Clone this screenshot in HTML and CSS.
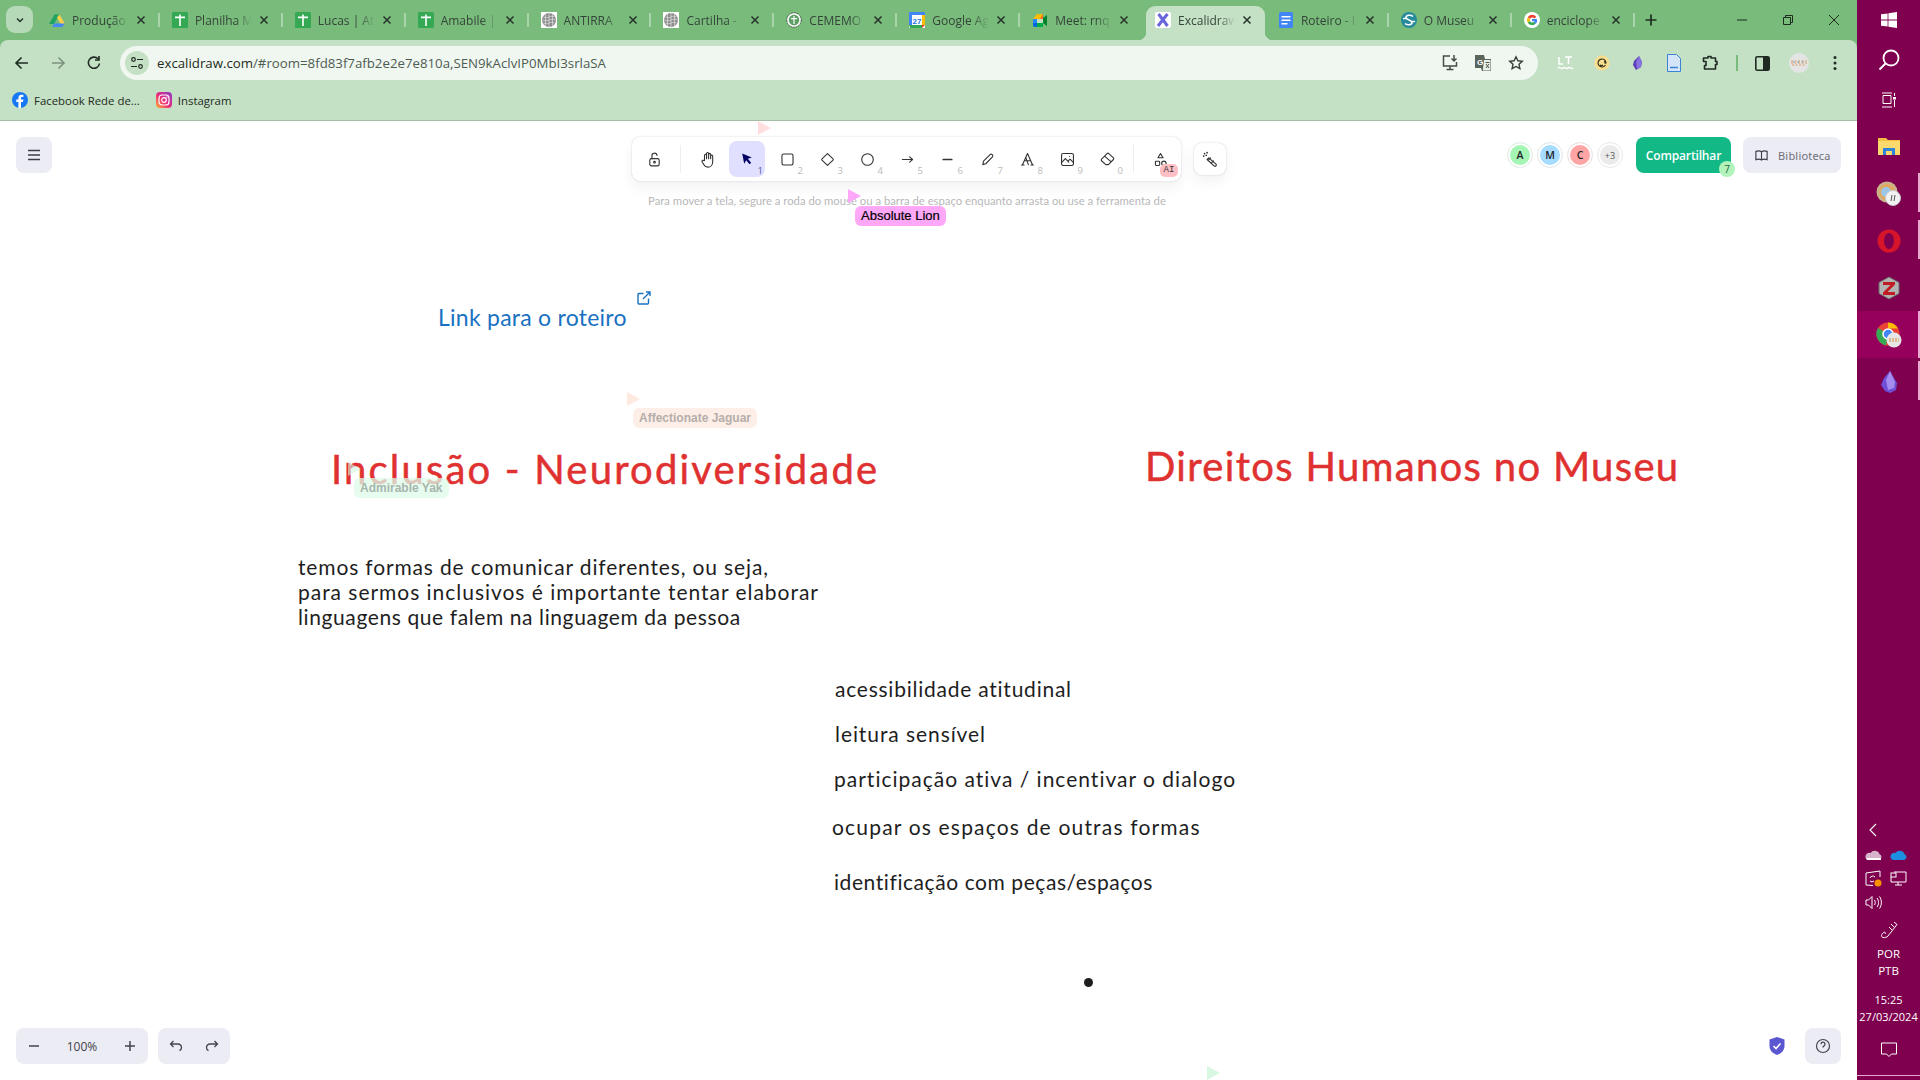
FILE: index.html
```html
<!DOCTYPE html>
<html lang="pt-BR">
<head>
<meta charset="utf-8">
<title>Excalidraw</title>
<link rel="stylesheet" href="styles.css">
</head>
<body>
<svg class="defs" width="0" height="0" aria-hidden="true">
  <symbol id="fav-sheet" viewBox="0 0 16 16"><rect width="16" height="16" rx="1.5" fill="#34a853"/><path d="M3 4.500h4.200V2.500h1.600v2H13v1.700H8.800V14H7.200V6.200H3z" fill="#fff"/></symbol>
  <symbol id="fav-brain" viewBox="0 0 16 16"><rect width="16" height="16" fill="#fff"/><circle cx="8" cy="8" r="7" fill="#8d8d8d"/><path d="M8 1v14M2.500 5c2 1 3.500 1 5.500 0s3.500-1 5.500 0M1.500 8c2 1 4.500 1 6.500 0s4.500-1 6.500 0M2.500 11c2 1 3.500 1 5.500 0s3.500-1 5.500 0M4.500 2.500v11M11.500 2.500v11" stroke="#e2e2e2" stroke-width=".7" fill="none"/></symbol>
  <symbol id="close" viewBox="0 0 10 10"><path d="M1.500 1.500l7 7M8.500 1.500l-7 7" stroke="#27322a" stroke-width="1.500" fill="none"/></symbol>
</svg>

<div class="screen">
  <main class="window">
    <header class="chrome">
      <div class="tabstrip">
        <button class="tab-search"><svg width="10" height="10" viewBox="0 0 10 10"><path d="M2 3.500l3 3 3-3" fill="none" stroke="#26352a" stroke-width="1.500"/></svg></button>
        <div class="tabs">
          <div class="tab"><svg class="fav" viewBox="0 0 16 16"><path d="M5.500 1.500h5L5 11H0z" fill="#1fa463" transform="translate(0 1)"/><path d="M10.500 2.500L16 12l-2.500 3L8 5.500z" fill="#ffd04b"/><path d="M5.200 11.500H16l-2.500 3.500H3z" fill="#4688f4"/></svg><span class="tab-title">Produção</span><svg class="tab-x"><use href="#close"/></svg></div>
          <div class="tab"><svg class="fav"><use href="#fav-sheet"/></svg><span class="tab-title">Planilha M</span><svg class="tab-x"><use href="#close"/></svg></div>
          <div class="tab"><svg class="fav"><use href="#fav-sheet"/></svg><span class="tab-title">Lucas | At</span><svg class="tab-x"><use href="#close"/></svg></div>
          <div class="tab"><svg class="fav"><use href="#fav-sheet"/></svg><span class="tab-title">Amabile |</span><svg class="tab-x"><use href="#close"/></svg></div>
          <div class="tab"><svg class="fav"><use href="#fav-brain"/></svg><span class="tab-title">ANTIRRA</span><svg class="tab-x"><use href="#close"/></svg></div>
          <div class="tab"><svg class="fav"><use href="#fav-brain"/></svg><span class="tab-title">Cartilha -</span><svg class="tab-x"><use href="#close"/></svg></div>
          <div class="tab"><svg class="fav" viewBox="0 0 16 16"><circle cx="8" cy="8" r="7.300" fill="#f4f8f4" stroke="#47614a" stroke-dasharray="2 .6"/><circle cx="8" cy="8" r="5.200" fill="#5aa062"/><path d="M7.400 4h1.200v8H7.400zM5 6h6v1.200H5z" fill="#fff"/></svg><span class="tab-title">CEMEMO</span><svg class="tab-x"><use href="#close"/></svg></div>
          <div class="tab"><svg class="fav" viewBox="0 0 16 16"><rect width="16" height="16" fill="#fff"/><path d="M0 0h16v3H3v10H0z" fill="#4285f4"/><path d="M0 13h13v3H1z" fill="#34a853"/><path d="M13 3h3v10h-3z" fill="#fbbc04"/><path d="M13 13h3l-3 3z" fill="#ea4335"/><text x="8" y="11.500" class="cal-num">27</text></svg><span class="tab-title">Google Ag</span><svg class="tab-x"><use href="#close"/></svg></div>
          <div class="tab tab-before-active"><svg class="fav" viewBox="0 0 16 16"><path d="M5 2h6v5H1z" fill="#fbbc04"/><path d="M1 7h4v4H1z" fill="#2684fc"/><path d="M1 11h4v4H3q-2 0-2-2z" fill="#0066da"/><path d="M5 11h6v4H5z" fill="#00ac47"/><path d="M11 2v5l-3 1 3 3 4 3V3l-4 3z" fill="#00832d"/><path d="M5 7h6v4H5z" fill="#c4e0c5"/><path d="M11 2h0v5H8z" fill="#ea4335" opacity=".7"/></svg><span class="tab-title">Meet: rnq</span><svg class="tab-x"><use href="#close"/></svg></div>
          <div class="tab tab-active"><svg class="fav" viewBox="0 0 16 16"><rect width="16" height="16" rx="2" fill="#fff"/><path d="M3.500 2l5 6.500 4 5.500M12.500 2L8 7.500 3 14" fill="none" stroke="#6965db" stroke-width="3"/></svg><span class="tab-title">Excalidraw</span><svg class="tab-x"><use href="#close"/></svg></div>
          <div class="tab"><svg class="fav" viewBox="0 0 16 16"><rect x="1" width="14" height="16" rx="1.500" fill="#4285f4"/><path d="M3.500 4h9v1.600h-9zM3.500 7.500h9v1.600h-9zM3.500 11h6v1.600h-6z" fill="#fff"/></svg><span class="tab-title">Roteiro - I</span><svg class="tab-x"><use href="#close"/></svg></div>
          <div class="tab"><svg class="fav" viewBox="0 0 16 16"><circle cx="8" cy="8" r="8" fill="#268a9c"/><path d="M12 4.500C10 2.500 5 3 5 5.500S11 8 11 10.500 6 13.500 4 11.500M2 6.500h4M10 9.500h4" fill="none" stroke="#fff" stroke-width="1.600"/></svg><span class="tab-title">O Museu</span><svg class="tab-x"><use href="#close"/></svg></div>
          <div class="tab"><svg class="fav" viewBox="0 0 16 16"><circle cx="8" cy="8" r="8" fill="#fff"/><path d="M12.300 5A5 5 0 0 0 3.800 5.300L6 7a2.600 2.600 0 0 1 4.300-.6z" fill="#ea4335"/><path d="M3.800 5.300a5 5 0 0 0 0 5.400L6 9a2.600 2.600 0 0 1 0-2z" fill="#fbbc04"/><path d="M3.800 10.700a5 5 0 0 0 8 .8L9.800 9.900A2.600 2.600 0 0 1 6 9z" fill="#34a853"/><path d="M13 7H8v2.200h2.600a2.500 2.500 0 0 1-.8 1l2 1.500A5 5 0 0 0 13 7z" fill="#4285f4"/></svg><span class="tab-title">enciclope</span><svg class="tab-x"><use href="#close"/></svg></div>
          <button class="new-tab"><svg width="14" height="14" viewBox="0 0 14 14"><path d="M7 1.500v11M1.500 7h11" stroke="#1f2b22" stroke-width="1.700"/></svg></button>
        </div>
        <div class="winctl">
          <svg width="12" height="12" viewBox="0 0 12 12"><path d="M1 6h10" stroke="#1d2a20"/></svg>
          <svg width="12" height="12" viewBox="0 0 12 12"><path d="M1.500 3.500h7v7h-7zM3.500 3.500v-2h7v7h-2" fill="none" stroke="#1d2a20"/></svg>
          <svg width="12" height="12" viewBox="0 0 12 12"><path d="M1 1l10 10M11 1L1 11" stroke="#1d2a20"/></svg>
        </div>
      </div>

      <div class="toolbar">
        <button class="nav"><svg width="16" height="16" viewBox="0 0 16 16"><path d="M14 8H2.500M7.500 2.500L2 8l5.500 5.500" fill="none" stroke="#1f2b22" stroke-width="1.600"/></svg></button>
        <button class="nav"><svg width="16" height="16" viewBox="0 0 16 16"><path d="M2 8h11.500M8.500 2.500L14 8l-5.500 5.500" fill="none" stroke="#7d917f" stroke-width="1.600"/></svg></button>
        <button class="nav"><svg width="16" height="16" viewBox="0 0 16 16"><path d="M13.500 8.500A5.600 5.600 0 1 1 12 3.800M13 1v4H9" fill="none" stroke="#1f2b22" stroke-width="1.600"/></svg></button>
        <div class="omnibox">
          <span class="site-info"><svg width="14" height="14" viewBox="0 0 14 14"><circle cx="3.500" cy="3.500" r="1.800" fill="none" stroke="#1f2b22" stroke-width="1.200"/><circle cx="10.500" cy="10.500" r="1.800" fill="none" stroke="#1f2b22" stroke-width="1.200"/><path d="M7 3.500h6M1 10.500h6" stroke="#1f2b22" stroke-width="1.200"/></svg></span>
          <span class="url"><span class="url-host">excalidraw.com</span><span class="url-rest">/#room=8fd83f7afb2e2e7e810a,SEN9kAclvIP0MbI3srlaSA</span></span>
          <span class="omni-actions">
            <span class="omni-btn"><svg width="18" height="18" viewBox="0 0 18 18"><path d="M9 2H2.500v10h13V8M5.500 15.500h7M9 12v3.500" fill="none" stroke="#444f46" stroke-width="1.500"/><path d="M13 1v5.500M10.500 4.500L13 7l2.500-2.500" fill="none" stroke="#444f46" stroke-width="1.500"/></svg></span>
            <span class="omni-btn"><svg width="18" height="18" viewBox="0 0 18 18"><path d="M1 1h9l1 4h6v12H8l-1-3H1z" fill="#5a655c"/><path d="M10 6h6.500v10.500H8.800z" fill="#e6f0e7"/><text x="3" y="11" class="tr-g">G</text><path d="M11.500 8.500h4M13.500 8v1M12 14l3-4M12 10l3 4" stroke="#4a564c" fill="none"/></svg></span>
            <span class="omni-btn"><svg width="16" height="16" viewBox="0 0 16 16"><path d="M8 1.800l1.900 4 4.400.5-3.300 3 .9 4.400L8 11.500l-3.900 2.200.9-4.400-3.300-3 4.400-.5z" fill="none" stroke="#333e35" stroke-width="1.400"/></svg></span>
          </span>
        </div>
        <div class="ext-row">
          <button class="nav"><svg width="18" height="16" viewBox="0 0 18 16"><path d="M2 2v7h4M8 2h7M11.500 2v7M1 13c2-2 3 2 5 0s3 2 5 0 3 2 5 0" fill="none" stroke="#fff" stroke-width="1.500"/></svg></button>
          <button class="nav"><svg width="16" height="16" viewBox="0 0 16 16"><circle cx="8" cy="8" r="7.500" fill="#f7df8d"/><path d="M11.500 10A4 4 0 1 1 12 7.500c0 1-1.200 1-1.200 0V6M5.500 7.500h.01M8.500 7.500h.01M6 10c1 .7 2 .7 3 0" fill="none" stroke="#36311e" stroke-width="1.200"/></svg></button>
          <button class="nav"><svg width="14" height="16" viewBox="0 0 14 16"><path d="M8 1L3 6l-1 4 3 5 5-3 1-5z" fill="#5a3fb8"/><path d="M8 1L5 7l1 7 4-2 1-5z" fill="#8a72e0"/></svg></button>
          <button class="nav"><svg width="14" height="18" viewBox="0 0 14 18"><path d="M.5.500h9l4 4v13H.5z" fill="#d4e5f8" stroke="#3b83d6"/><path d="M3 13.500h8" stroke="#3b83d6" stroke-width="1.500"/></svg></button>
          <button class="nav"><svg width="16" height="16" viewBox="0 0 16 16"><path d="M6 1.500h3V3h4.500v3.500H15v3h-1.500V14h-11v-3.500H4V6.500H1.500V3H6z" fill="none" stroke="#1f2b22" stroke-width="1.600" stroke-linejoin="round"/></svg></button>
          <span class="toolbar-sep"></span>
          <button class="nav"><svg width="15" height="15" viewBox="0 0 15 15"><rect x=".8" y=".8" width="13.400" height="13.400" rx="1.500" fill="none" stroke="#1f2b22" stroke-width="1.600"/><path d="M8 1h6v13H8z" fill="#1f2b22"/></svg></button>
          <button class="nav"><svg width="20" height="20" viewBox="0 0 20 20"><circle cx="10" cy="10" r="10" fill="#e4e4e4"/><path d="M2 8h16M2 10h16M3 12h14" stroke="#d28a3c" stroke-width=".8" stroke-dasharray="2 1.500"/><path d="M4 9h12" stroke="#4a8ccf" stroke-width=".8" stroke-dasharray="1.500 3"/></svg></button>
          <button class="nav"><svg width="4" height="16" viewBox="0 0 4 16"><circle cx="2" cy="2.500" r="1.500" fill="#1f2b22"/><circle cx="2" cy="8" r="1.500" fill="#1f2b22"/><circle cx="2" cy="13.500" r="1.500" fill="#1f2b22"/></svg></button>
        </div>
      </div>

      <nav class="bookmarks">
        <a class="bookmark"><svg class="fav" viewBox="0 0 16 16"><circle cx="8" cy="8" r="8" fill="#1877f2"/><path d="M9 16V10h2l.4-2.400H9V6.200c0-.8.300-1.200 1.300-1.200h1.100V3c-.5-.1-1.200-.2-1.800-.2-2 0-3.200 1.200-3.200 3.300v1.500H4.300V10h2.100v6z" fill="#fff"/></svg><span>Facebook Rede de...</span></a>
        <a class="bookmark"><svg class="fav" viewBox="0 0 16 16"><defs><linearGradient id="ig" x1="0" y1="1" x2="1" y2="0"><stop offset="0" stop-color="#fdb32e"/><stop offset=".45" stop-color="#ee2a7b"/><stop offset="1" stop-color="#8a3ac8"/></linearGradient></defs><rect width="16" height="16" rx="4" fill="url(#ig)"/><rect x="3" y="3" width="10" height="10" rx="3" fill="none" stroke="#fff" stroke-width="1.200"/><circle cx="8" cy="8" r="2.300" fill="none" stroke="#fff" stroke-width="1.200"/><circle cx="11" cy="5" r=".7" fill="#fff"/></svg><span>Instagram</span></a>
      </nav>
    </header>

    <section class="canvas">
      <!-- free canvas: drawing elements and remote cursors -->
      <p class="draw link-text">Link para o roteiro</p>
      <svg class="draw ext-link" width="14" height="14" viewBox="0 0 14 14"><path d="M6.500 2.500H2a1 1 0 0 0-1 1V12a1 1 0 0 0 1 1h8.500a1 1 0 0 0 1-1V7.500M6 8l7-7M9 1h4v4" fill="none" stroke="#1971c2" stroke-width="1.400"/></svg>
      <h1 class="draw title title-a">Inclusão - Neurodiversidade</h1>
      <h1 class="draw title title-b">Direitos Humanos no Museu</h1>
      <p class="draw para"><span class="para-l1">temos formas de comunicar diferentes, ou seja,</span><span class="para-l2">para sermos inclusivos é importante tentar elaborar</span><span class="para-l3">linguagens que falem na linguagem da pessoa</span></p>
      <p class="draw item item-1">acessibilidade atitudinal</p>
      <p class="draw item item-2">leitura sensível</p>
      <p class="draw item item-3">participação ativa / incentivar o dialogo</p>
      <p class="draw item item-4">ocupar os espaços de outras formas</p>
      <p class="draw item item-5">identificação com peças/espaços</p>
      <span class="dot"></span>

      <span class="ghost-cursor gc-pink"></span>
      <span class="cursor cur-jaguar"></span><span class="cursor-label lab-jaguar">Affectionate Jaguar</span>
      <span class="cursor cur-yak"></span><span class="cursor-label lab-yak">Admirable Yak</span>
      <span class="ghost-cursor gc-green"></span>

      <div class="ex-top">
        <div class="ex-left">
          <button class="ex-btn"><svg width="14" height="12" viewBox="0 0 14 12"><path d="M1 1.500h12M1 6h12M1 10.500h12" stroke="#3d3d4a" stroke-width="1.500"/></svg></button>
        </div>
        <div class="ex-center">
          <div class="ex-center-row">
            <div class="tools">
              <button class="tool"><svg class="ti" viewBox="0 0 20 20"><rect x="4.500" y="9" width="11" height="8.500" rx="2"/><circle cx="10" cy="13.200" r="1"/><path d="M7 9V6a3 3 0 0 1 6-.8"/></svg></button>
              <span class="tool-div"></span>
              <button class="tool"><svg class="ti" viewBox="0 0 20 20"><path d="M6.500 11V5a1.200 1.200 0 0 1 2.400 0v4-6a1.200 1.200 0 0 1 2.400 0v6-5a1.200 1.200 0 0 1 2.400 0v5-3a1.200 1.200 0 0 1 2.400 0v6.500c0 4-2.500 6.500-5.500 6.500-3.500 0-4.500-2-7-6.500-.6-1.300 1.400-2.300 2.400-1z"/></svg></button>
              <button class="tool tool-on"><svg class="ti-sel" viewBox="0 0 20 20"><path d="M4 3l12 5-5 1.800 4.200 5-2 1.700L9 11.500 6.500 16z" fill="#030064"/></svg><span class="key key-on">1</span></button>
              <button class="tool"><svg class="ti" viewBox="0 0 20 20"><rect x="3.500" y="3.500" width="13" height="13" rx="2"/></svg><span class="key">2</span></button>
              <button class="tool"><svg class="ti" viewBox="0 0 20 20"><path d="M10 3l6.500 6.200a1 1 0 0 1 0 1.500L10 17l-6.500-6.300a1 1 0 0 1 0-1.500z"/></svg><span class="key">3</span></button>
              <button class="tool"><svg class="ti" viewBox="0 0 20 20"><circle cx="10" cy="10" r="6.800"/></svg><span class="key">4</span></button>
              <button class="tool"><svg class="ti" viewBox="0 0 20 20"><path d="M4 10h12M12.500 7l3.500 3-3.500 3"/></svg><span class="key">5</span></button>
              <button class="tool"><svg class="ti" viewBox="0 0 20 20"><path d="M5 10h10" stroke-width="2"/></svg><span class="key">6</span></button>
              <button class="tool"><svg class="ti" viewBox="0 0 20 20"><path d="M4.500 16l.8-4L13 4.200a2 2 0 0 1 2.800 2.800L8 15z"/></svg><span class="key">7</span></button>
              <button class="tool"><svg class="ti" viewBox="0 0 20 20"><path d="M4 16.500L10 3l6 13.500M6.500 11.500h7M3 16.500h3M14 16.500h3M8 7.500L11 16"/></svg><span class="key">8</span></button>
              <button class="tool"><svg class="ti" viewBox="0 0 20 20"><rect x="3" y="3" width="14" height="14" rx="2"/><path d="M3.500 13l4-4 4 4M11 11.500l2-2 3.500 3.500M12.500 6.500h.01"/></svg><span class="key">9</span></button>
              <button class="tool"><svg class="ti" viewBox="0 0 20 20"><path d="M8 16l-5-4.500a1.500 1.500 0 0 1 0-2l6.500-6.500a1.500 1.500 0 0 1 2 0l5.500 5a1.500 1.500 0 0 1 0 2L11 16zM6.500 6l7.500 6.500"/></svg><span class="key">0</span></button>
              <span class="tool-div"></span>
              <button class="tool"><svg class="ti" viewBox="0 0 20 20"><path d="M10 3l3 5H7z"/><rect x="4" y="12" width="5" height="5" rx="1"/><circle cx="14" cy="14.500" r="2.600"/></svg><span class="ai-badge">AI</span></button>
            </div>
            <button class="magic"><svg class="ti" viewBox="0 0 20 20"><path d="M8 8l8.500 7.500a1.500 1.500 0 0 1-2 2.200L6 10z" /><path d="M8 10l2-2M11 14l2.500-2.500"/><path d="M3 3h.01M6 2h.01M2 6h.01M5 5h.01" stroke-width="2"/></svg></button>
          </div>
          <p class="hint">Para mover a tela, segure a roda do mouse ou a barra de espaço enquanto arrasta ou use a ferramenta de<br>mão</p>
        </div>
        <div class="ex-right">
          <div class="avatars">
            <span class="avatar av-a">A</span>
            <span class="avatar av-m">M</span>
            <span class="avatar av-c">C</span>
            <span class="avatar av-more">+3</span>
          </div>
          <button class="share">Compartilhar<span class="share-count">7</span></button>
          <button class="library"><svg class="lib-ic" viewBox="0 0 20 20"><path d="M2.500 4.500c3-1 5.500-1 7.500.5 2-1.500 4.500-1.500 7.500-.5v11c-3-1-5.500-1-7.500.5-2-1.500-4.500-1.500-7.500-.5zM10 5v11"/></svg><span>Biblioteca</span></button>
        </div>
      </div>

      <span class="cursor cur-lion"></span><span class="cursor-label lab-lion">Absolute Lion</span>

      <div class="ex-bottom">
        <div class="ex-group zoom-group">
          <button class="pill-btn"><svg width="12" height="12" viewBox="0 0 12 12"><path d="M1 6h10" stroke="#444450" stroke-width="1.500"/></svg></button>
          <span class="zoom-val">100%</span>
          <button class="pill-btn"><svg width="12" height="12" viewBox="0 0 12 12"><path d="M1 6h10M6 1v10" stroke="#444450" stroke-width="1.500"/></svg></button>
        </div>
        <div class="ex-group">
          <button class="pill-btn"><svg width="14" height="14" viewBox="0 0 14 14"><path d="M4.500 2L1.500 5l3 3M1.500 5H9a3.500 3.500 0 0 1 3.500 3.500c0 1.500-.8 2.700-2 3.200" fill="none" stroke="#444450" stroke-width="1.300"/></svg></button>
          <button class="pill-btn"><svg width="14" height="14" viewBox="0 0 14 14"><path d="M9.500 2l3 3-3 3M12.500 5H5a3.500 3.500 0 0 0-3.500 3.500c0 1.500.8 2.700 2 3.200" fill="none" stroke="#444450" stroke-width="1.300"/></svg></button>
        </div>
        <span class="spacer"></span>
        <svg class="shield" width="18" height="20" viewBox="0 0 18 20"><path d="M9 1l7.500 2.500V10c0 4.500-3.500 7.500-7.500 9-4-1.500-7.500-4.500-7.500-9V3.500z" fill="#5b57d1"/><path d="M5.500 10l2.500 2.500 4.500-5" fill="none" stroke="#fff" stroke-width="1.600"/></svg>
        <button class="ex-btn"><svg width="16" height="16" viewBox="0 0 16 16"><circle cx="8" cy="8" r="6.500" fill="none" stroke="#444450" stroke-width="1.200"/><path d="M6 6.200a2 2 0 1 1 3 1.700c-.7.400-1 .8-1 1.600M8 11.500h.01" fill="none" stroke="#444450" stroke-width="1.300"/></svg></button>
      </div>
    </section>
  </main>

  <aside class="taskbar">
    <div class="task-top">
      <span class="task-item"><svg width="16" height="16" viewBox="0 0 16 16"><path d="M0 2.300l6.600-.9v6.200H0zM7.400 1.300L16 0v7.600H7.400zM0 8.400h6.600v6.200L0 13.700zM7.400 8.400H16V16l-8.600-1.200z" fill="#fff"/></svg></span>
      <span class="task-item"><svg width="22" height="22" viewBox="0 0 22 22"><circle cx="13" cy="9" r="7.500" fill="none" stroke="#fff" stroke-width="1.800"/><path d="M7.500 14.500L1.500 20.500" stroke="#fff" stroke-width="2"/></svg></span>
      <span class="task-item"><svg width="16" height="16" viewBox="0 0 16 16"><path d="M1 1h10M1 15h10M2 3.500h8v8H2zM13.500 1v3M13.500 8v7" stroke="#fff" fill="none"/><rect x="12" y="5" width="3" height="2.500" fill="#fff"/></svg></span>
      <span class="task-item task-folder"><svg width="22" height="20" viewBox="0 0 22 20"><path d="M0 2h8l2 2h12v15H0z" fill="#f3c043"/><path d="M0 5h22v14H0z" fill="#fbd96c"/><path d="M5 19v-7h12v7h-3v-4H8v4z" fill="#2d83d8"/></svg></span>
      <span class="task-item task-app"><svg width="26" height="26" viewBox="0 0 26 26"><circle cx="11" cy="11" r="10.500" fill="#c9b48c"/><circle cx="11" cy="11" r="8" fill="#e0a860"/><circle cx="10" cy="11" r="5" fill="#9ac7e8"/><circle cx="17" cy="17" r="7.500" fill="#f2f2f2" stroke="#ccc"/><path d="M15 20l1-6M18 20l1-6" stroke="#555" fill="none"/></svg></span>
      <span class="task-item task-app"><svg width="24" height="24" viewBox="0 0 24 24"><ellipse cx="12" cy="12" rx="11.500" ry="11.500" fill="#d7152a"/><ellipse cx="12" cy="12" rx="5" ry="8" fill="#7f004e"/></svg></span>
      <span class="task-item task-app task-no-run"><svg width="24" height="24" viewBox="0 0 24 24"><path d="M12 1l10 5.500v11L12 23 2 17.500v-11z" fill="#b3b3b3" stroke="#6b6b6b"/><path d="M6 6h12v2.500L10.500 16H18v3H6v-2.500L13.500 9H6z" fill="#c01c22"/></svg></span>
      <span class="task-item task-app task-active"><svg width="26" height="26" viewBox="0 0 26 26"><circle cx="12" cy="12" r="11.500" fill="#ea4335"/><path d="M12 12L2 6a11.500 11.500 0 0 0 8 17.300z" fill="#34a853"/><path d="M12 .5h0a11.500 11.500 0 0 1 10 6H12z" fill="#fbbc04"/><circle cx="12" cy="12" r="5" fill="#4285f4" stroke="#fff" stroke-width="1.500"/><circle cx="18" cy="18" r="7.500" fill="#e6e6e6"/><path d="M13 17h10M13 19h10" stroke="#d08a3a" stroke-dasharray="2 1"/></svg></span>
      <span class="task-item task-app"><svg width="18" height="22" viewBox="0 0 18 22"><path d="M10 0L4 7 1 14l4 6 5 2 6-3 1-7z" fill="#6f4fd6"/><path d="M10 0L6 9l2 10 6-2 1-6z" fill="#a78cf0"/></svg></span>
    </div>
    <div class="tray">
      <span class="tray-back"><svg width="10" height="14" viewBox="0 0 10 14"><path d="M8 1L2 7l6 6" fill="none" stroke="#fff" stroke-width="1.100"/></svg></span>
      <div class="tray-grid">
        <svg width="17" height="11" viewBox="0 0 17 11"><path d="M3 10h11a3 3 0 0 0 .5-5.800A5 5 0 0 0 5.500 3 3.500 3.500 0 0 0 3 10z" fill="#d8b3cc"/><path d="M1 8h15v2H2z" fill="#fff"/></svg>
        <svg width="17" height="11" viewBox="0 0 17 11"><path d="M3 10h11a3 3 0 0 0 .5-5.800A5 5 0 0 0 5.500 3 3.500 3.500 0 0 0 3 10z" fill="#1c8fe0"/></svg>
        <svg width="17" height="17" viewBox="0 0 17 17"><path d="M1 3l14-2v6M1 3v12l7 .5" fill="none" stroke="#fff"/><path d="M5 8a3 3 0 0 1 5-1M9 11a3 3 0 0 1-4 0" fill="none" stroke="#fff"/><circle cx="13" cy="13" r="3.500" fill="#f79100"/></svg>
        <svg width="17" height="17" viewBox="0 0 17 17"><path d="M4 2h12v10H1V7M8 12v3M5 15h7" fill="none" stroke="#fff"/><rect x="1" y="3" width="5" height="4" fill="none" stroke="#fff"/></svg>
        <svg width="17" height="17" viewBox="0 0 17 17"><path d="M1 6h2.500L7 2.500v12L3.500 11H1zM9.500 6c1 1.500 1 3.500 0 5M12 4c2 2.500 2 6.500 0 9M14.500 2.500c2.500 3.500 2.500 8.500 0 12" fill="none" stroke="#fff"/></svg>
      </div>
      <span class="tray-pen"><svg width="18" height="18" viewBox="0 0 18 18"><path d="M14 1l3 2.500L8 15c-1 1-3 2-5 1.500S1 14 3 12c2-2 3 0 2 1M11 3l3 3M9 6l3 3" fill="none" stroke="#fff"/></svg></span>
      <span class="tray-lang">POR<br>PTB</span>
      <span class="tray-clock">15:25<br>27/03/2024</span>
      <span class="tray-notif"><svg width="16" height="16" viewBox="0 0 16 16"><path d="M.5 1h15v11h-5L8 14.500 5.500 12h-5z" fill="none" stroke="#fff"/></svg></span>
      <span class="tray-line"></span>
    </div>
  </aside>
</div>
</body>
</html>
```
FILE: styles.css
```css
* { box-sizing: border-box; }
html, body { margin: 0; height: 100%; overflow: hidden; }
body { font-family: "Open Sans", "Noto Sans", sans-serif; background: #fff; }
button { border: 0; background: none; padding: 0; font: inherit; }
p, h1 { margin: 0; }
.defs { position: absolute; }

.screen { display: flex; width: 1920px; height: 1080px; }
.window { width: 1857px; display: flex; flex-direction: column; background: #fff; flex: none; }

/* browser */
.chrome { background: #78bb7b; flex: none; }
.tabstrip { display: flex; height: 40px; position: relative; }
.tab-search { width: 27px; height: 27px; margin: 6px 3px 0 6px; border-radius: 9px; background: #b6d9b8; display: flex; align-items: center; justify-content: center; flex: none; }
.tabs { display: flex; flex: none; }
.tab { width: 122.9px; height: 34px; margin-top: 6px; display: flex; align-items: center; padding: 0 0 6px 13px; position: relative; flex: none; isolation: isolate; }
.tab::after { content: ""; position: absolute; right: -1px; top: 7px; height: 14px; width: 2px; background: #a9d3ab; }
.tab-before-active::after { display: none; }
.fav { width: 16px; height: 16px; flex: none; }
.tab-title { width: 58px; margin-left: 7px; white-space: nowrap; font-size: 12px; color: #35443a; -webkit-mask-image: linear-gradient(90deg, #000 70%, transparent 98%); mask-image: linear-gradient(90deg, #000 70%, transparent 98%); }
.tab-x { width: 10px; height: 10px; margin-left: 6px; flex: none; }
.tab-active::before { content: ""; position: absolute; inset: 0 0 0 4px; z-index: -1; background: #c4e0c5; border-radius: 9px 9px 0 0; }
.tab-active::after { right: -8px; left: -4px; top: auto; bottom: 0; width: auto; height: 8px; z-index: -2; background:
  radial-gradient(circle at 0 0, #78bb7b 8px, #c4e0c5 8.5px) left bottom / 8px 8px no-repeat,
  radial-gradient(circle at 100% 0, #78bb7b 8px, #c4e0c5 8.5px) right bottom / 8px 8px no-repeat; }
.new-tab { width: 34px; height: 34px; margin-top: 3px; display: flex; align-items: center; justify-content: center; flex: none; }
.winctl { margin-left: auto; display: flex; gap: 34px; align-items: center; padding-right: 17px; height: 40px; }

.toolbar { height: 40px; background: #c4e0c5; border-radius: 8px 8px 0 0; display: flex; align-items: flex-start; padding: 6px 3px 0 4px; }
.nav { width: 36px; height: 34px; display: flex; align-items: center; justify-content: center; flex: none; }
.omnibox { width: 1418px; margin-left: 8px; height: 34px; border-radius: 17px; background: #f0f7f1; display: flex; align-items: center; padding: 0 6px 0 5px; flex: none; }
.site-info { width: 24px; height: 24px; border-radius: 50%; background: #c4e0c5; display: flex; align-items: center; justify-content: center; flex: none; }
.url { margin-left: 8px; font-size: 13.250px; white-space: nowrap; }
.url-host { color: #1f2b22; }
.url-rest { color: #4e5c51; }
.omni-actions { margin-left: auto; display: flex; }
.omni-btn { width: 33px; height: 34px; display: flex; align-items: center; justify-content: center; }
.ext-row { display: flex; margin-left: 9.500px; align-items: center; }
.toolbar-sep { width: 2px; height: 16px; background: #78bb7b; margin: 0 7px 0 8px; }

.bookmarks { height: 41px; background: #c4e0c5; border-bottom: 1px solid #a5bca6; display: flex; align-items: center; padding-left: 12px; gap: 16px; }
.bookmark { display: flex; align-items: center; gap: 6px; font-size: 11.400px; color: #1f2b22; }

/* canvas */
.canvas { flex: 1; position: relative; overflow: hidden; background: #fff; display: flex; flex-direction: column; justify-content: space-between; }
.draw { position: absolute; white-space: nowrap; font-family: "Lato", "Noto Sans", sans-serif; font-weight: 400; color: #1e1e1e; }
.link-text { left: 438px; top: 181px; font-size: 23px; line-height: 30px; color: #1971c2; letter-spacing: 0.250px; }
.ext-link { left: 637px; top: 170px; }
.title { font-size: 40px; line-height: 50px; color: #e03131; font-weight: 400; -webkit-text-stroke: .5px #e03131; }
.title-a { left: 331px; top: 323px; letter-spacing: 2.180px; }
.title-b { left: 1145px; top: 320px; letter-spacing: 1.320px; }
.para { left: 298px; top: 433px; font-size: 21px; line-height: 25px; }
.para-l1, .para-l2, .para-l3 { display: block; }
.para-l1 { letter-spacing: .85px; }
.para-l2 { letter-spacing: .97px; }
.para-l3 { letter-spacing: .6px; }
.item { font-size: 21px; line-height: 26px; letter-spacing: 1px; }
.item-1 { left: 835px; top: 555px; letter-spacing: .76px; }
.item-2 { left: 835px; top: 600px; letter-spacing: .92px; }
.item-3 { left: 834px; top: 645px; }
.item-4 { left: 832px; top: 693px; letter-spacing: 1.180px; }
.item-5 { left: 834px; top: 748px; letter-spacing: .57px; }
.dot { position: absolute; left: 1084px; top: 857px; width: 9px; height: 9px; border-radius: 50%; background: #1e1e1e; }

/* remote cursors */
.cursor, .ghost-cursor { position: absolute; width: 0; height: 0; border-top: 7px solid transparent; border-bottom: 7px solid transparent; border-left-width: 13px; border-left-style: solid; }
.cursor-label { position: absolute; font-family: "Liberation Sans", sans-serif; font-size: 12px; font-weight: 700; line-height: 14px; padding: 3px 6px; border-radius: 6px; white-space: nowrap; }
.gc-pink { left: 758px; top: 0; border-left-color: #ffdfe0; }
.gc-green { left: 1207px; top: 945px; border-left-color: #d8f8e2; }
.cur-lion { left: 848px; top: 68px; border-left-color: #ffa8f9; }
.lab-lion { left: 855px; top: 85px; background: #ffa8f9; color: #000; font-size: 13px; font-weight: 400; -webkit-text-stroke: .2px #000; }
.cur-jaguar { left: 627px; top: 271px; border-left-color: #fde9e0; }
.lab-jaguar { left: 633px; top: 287px; background: #fdeee7; color: #b5aeaa; }
.cur-yak { left: 348px; top: 341px; border-left-color: rgba(210, 247, 225, .6); }
.lab-yak { left: 354px; top: 357px; background: rgba(221, 251, 233, .75); color: #a7b5ac; }

/* excalidraw ui */
.ex-top { display: grid; grid-template-columns: 1fr auto 1fr; padding: 16px 16px 0 17px; position: relative; }
.ex-btn { width: 36px; height: 36px; border-radius: 8px; background: #ececf4; display: flex; align-items: center; justify-content: center; flex: none; }
.ex-left .ex-btn { margin-left: -1px; }
.ex-center { display: flex; flex-direction: column; align-items: center; }
.ex-center-row { display: flex; gap: 13px; align-items: center; }
.tools { display: flex; align-items: center; width: 549px; height: 44px; padding: 0 4px; background: #fff; border-radius: 8px; box-shadow: 0 0 1px rgba(0,0,0,.17), 0 0 3px rgba(0,0,0,.08), 0 7px 14px rgba(0,0,0,.05); }
.tool { width: 36px; height: 36px; margin-right: 4px; border-radius: 8px; position: relative; display: flex; align-items: center; justify-content: center; flex: none; }
.tool-on { background: #e0dfff; }
.tool-div { width: 1px; height: 28px; background: #eee; margin: 0 8px 0 4px; flex: none; }
.tool:last-child { margin-right: 0; }
.ti { width: 17px; height: 17px; fill: none; stroke: #333; stroke-width: 1.300; stroke-linejoin: round; stroke-linecap: round; }
.ti-sel { width: 16px; height: 16px; }
.key { position: absolute; right: 2px; bottom: 0; font-size: 9.500px; line-height: 12px; color: #b9b9b9; }
.key-on { color: #5a58a0; }
.ai-badge { position: absolute; right: 0; bottom: 0; width: 18px; height: 13px; border-radius: 5px; background: #ffc0c5; font-family: "Liberation Mono", monospace; font-size: 9px; line-height: 13px; color: #333; text-align: center; }
.magic { width: 32px; height: 32px; border-radius: 8px; background: #fff; display: flex; align-items: center; justify-content: center; box-shadow: 0 0 1px rgba(0,0,0,.17), 0 0 3px rgba(0,0,0,.08), 0 7px 14px rgba(0,0,0,.05); }
.hint { margin: 12px 44px 0 0; font-family: "Lato", sans-serif; font-size: 11.300px; line-height: 16px; color: #b8b8b8; text-align: center; width: 530px; }
.ex-right { display: flex; align-items: flex-start; justify-content: flex-end; }
.avatars { display: flex; gap: 4px; margin-right: 13px; padding-top: 5px; }
.avatar { width: 26px; height: 26px; border-radius: 50%; font-size: 10.500px; font-weight: 600; color: #1e1e28; display: flex; align-items: center; justify-content: center; border: 1px solid #ececec; box-shadow: inset 0 0 0 2px #fff; }
.av-a { background: #a5f5b5; }
.av-m { background: #a5dcff; }
.av-c { background: #ffa5a5; }
.av-more { background: #ebebeb; font-size: 9px; font-weight: 400; color: #555; }
.share { position: relative; width: 95px; height: 36px; border-radius: 8px; background: #12b886; color: #fff; font-size: 12px; font-weight: 600; margin-right: 12px; letter-spacing: -.15px; }
.share-count { position: absolute; right: -4px; bottom: -4px; width: 16px; height: 16px; border-radius: 50%; background: #b2f2bb; color: #2b6b3b; font-size: 10px; font-weight: 400; line-height: 16px; text-align: center; }
.library { width: 98px; height: 36px; border-radius: 8px; background: #ececf4; display: flex; align-items: center; padding-left: 11px; gap: 9px; font-family: "Noto Sans", sans-serif; font-size: 11px; letter-spacing: .2px; color: #6f6f7b; }
.lib-ic { width: 15px; height: 15px; fill: none; stroke: #3d3d4a; stroke-width: 1.500; flex: none; }

.ex-bottom { display: flex; align-items: center; padding: 0 16px 16px 16px; gap: 10px; position: relative; }
.ex-group { height: 36px; border-radius: 8px; background: #ececf4; display: flex; align-items: center; }
.zoom-group { width: 132px; justify-content: space-between; }
.pill-btn { width: 36px; height: 36px; display: flex; align-items: center; justify-content: center; }
.zoom-val { font-size: 12px; color: #3f3f48; }
.spacer { flex: 1; }
.shield { margin-right: 9px; }

/* taskbar */
.taskbar { width: 63px; background: #7f004e; display: flex; flex-direction: column; justify-content: space-between; color: #fff; position: relative; flex: none; }
.task-top { display: flex; flex-direction: column; }
.task-item { height: 47px; display: flex; align-items: center; justify-content: center; position: relative; }
.task-item:nth-child(1) { height: 40px; }
.task-item:nth-child(2) { height: 40px; }
.task-item:nth-child(3) { height: 39px; }
.task-item.task-folder { height: 51px; padding-top: 3px; }
.task-app::after { content: ""; position: absolute; right: 0; top: 3px; bottom: 5px; width: 2px; background: #e9a8d0; }
.task-no-run::after { display: none; }
.task-active { background: #96005c; }
.task-active::after { top: 0; bottom: 0; }
.tray { display: flex; flex-direction: column; align-items: stretch; padding-bottom: 4px; position: relative; }
.tray-back { height: 20px; padding-left: 11px; display: flex; align-items: center; }
.tray-grid { display: grid; grid-template-columns: 25px 25px; grid-auto-rows: 23.500px; padding: 4px 0 0 4px; align-items: center; justify-items: center; }
.tray-pen { height: 24px; margin-top: 4px; display: flex; align-items: center; justify-content: center; }
.tray-lang { margin-top: 3px; text-align: center; font-size: 11.500px; line-height: 17px; }
.tray-clock { margin-top: 11.500px; text-align: center; font-size: 11px; line-height: 17px; white-space: nowrap; }
.tray-notif { height: 34px; margin-top: 8.500px; display: flex; align-items: center; justify-content: center; }
.tray-line { height: 1px; background: #e9a8d0; margin-top: 8px; }
.cal-num { font-family: "Liberation Sans", sans-serif; font-size: 8px; font-weight: 700; fill: #1a73e8; text-anchor: middle; }
.tr-g { font-family: "Liberation Sans", sans-serif; font-size: 8px; font-weight: 700; fill: #fff; }
```
